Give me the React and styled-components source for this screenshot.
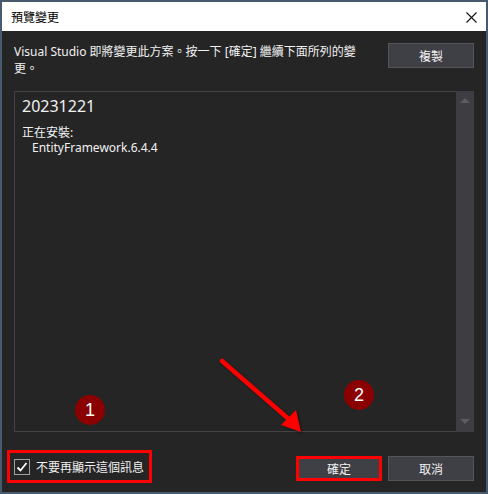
import React, { useState } from 'react'
import styled, { createGlobalStyle } from 'styled-components';

const GlobalStyle = createGlobalStyle`
  html, body {
    margin: 0;
    padding: 0;
    background: #475a6e;
  }
  * { box-sizing: border-box; }
`;

const font = `"Noto Sans", "Noto Sans CJK TC", sans-serif`;

const App = () => {
    const [hideNext, setHideNext] = useState(true)

    return (
        <>
            <GlobalStyle />
            <Window>
                <TitleBar>
                    <Title>預覽變更</Title>
                    <CloseButton aria-label="close">
                        <svg width="11" height="11" viewBox="0 0 11 11">
                            <path d="M0.5 0.5 L10.5 10.5 M10.5 0.5 L0.5 10.5" stroke="#111" strokeWidth="1.1" />
                        </svg>
                    </CloseButton>
                </TitleBar>

                <Body>
                    <Header>
                        <Message>Visual Studio 即將變更此方案。按一下 [確定] 繼續下面所列的變更。</Message>
                        <Button>複製</Button>
                    </Header>

                    <ChangesBox>
                        <ChangesText>
                            <BuildId>20231221</BuildId>
                            <Section>正在安裝:</Section>
                            <Item>EntityFramework.6.4.4</Item>
                        </ChangesText>
                        <ScrollBar>
                            <Arrow $dir="up" />
                            <Arrow $dir="down" />
                        </ScrollBar>
                    </ChangesBox>

                    <Footer>
                        <CheckRow onClick={() => setHideNext(!hideNext)}>
                            <CheckBox>
                                {hideNext && (
                                    <svg width="12" height="12" viewBox="0 0 12 12">
                                        <path d="M1.5 6.5 L4.5 9.5 L10.5 2" fill="none" stroke="#fff" strokeWidth="1.8" />
                                    </svg>
                                )}
                            </CheckBox>
                            <span>不要再顯示這個訊息</span>
                        </CheckRow>
                        <Buttons>
                            <Button $highlight>確定</Button>
                            <Button>取消</Button>
                        </Buttons>
                    </Footer>
                </Body>

                <Badge $x={73} $y={393}>1</Badge>
                <Badge $x={342} $y={378}>2</Badge>

                <PointerArrow width="488" height="494" viewBox="0 0 488 494">
                    <line x1="222" y1="361" x2="291" y2="421" stroke="#ff0000" strokeWidth="4.5" strokeLinecap="round" />
                    <polygon points="281,425 296,410 301,432" fill="#ff0000" />
                </PointerArrow>
            </Window>
        </>
    )
}

export default App


const Window = styled.div`
  position: relative;
  width: 488px;
  height: 494px;
  border: 2px solid #475a6e;
  display: flex;
  flex-direction: column;
  font-family: ${font};
`;

const TitleBar = styled.div`
  height: 29px;
  background: #ffffff;
  display: flex;
  align-items: center;
  justify-content: space-between;
  padding: 0 8px 0 9px;
`;

const Title = styled.div`
  font-size: 12px;
  color: #000;
`;

const CloseButton = styled.div`
  width: 14px;
  height: 14px;
  display: flex;
  align-items: center;
  justify-content: center;
  margin-top: 1px;
`;

const Body = styled.div`
  flex: 1;
  background: #252526;
  padding: 11px 12px 9px 12px;
  display: flex;
  flex-direction: column;
  color: #f1f1f1;
`;

const Header = styled.div`
  display: flex;
  justify-content: space-between;
  align-items: flex-start;
  height: 34px;
  margin-bottom: 15px;
`;

const Message = styled.div`
  width: 350px;
  font-size: 12px;
  line-height: 17px;
  margin-top: 1px;
`;

const Button = styled.button`
  width: 86px;
  height: 25px;
  margin-top: 1px;
  background: #3f3f46;
  border: ${p => p.$highlight ? '3px solid #ff0000' : '1px solid #555558'};
  color: #f1f1f1;
  font-family: ${font};
  font-size: 12px;
  padding: 0;
  cursor: pointer;
`;

const ChangesBox = styled.div`
  height: 341px;
  display: flex;
  border: 1px solid #434346;
  border-right: none;
`;

const ChangesText = styled.div`
  flex: 1;
  padding: 3px 7px;
`;

const BuildId = styled.div`
  font-size: 16px;
  line-height: 22px;
  margin-bottom: 8px;
`;

const Section = styled.div`
  font-size: 12px;
  line-height: 15px;
`;

const Item = styled.div`
  font-size: 12px;
  line-height: 15px;
  padding-left: 10px;
`;

const ScrollBar = styled.div`
  width: 18px;
  margin: -1px 0;
  background: #3e3e42;
  display: flex;
  flex-direction: column;
  justify-content: space-between;
  align-items: center;
  padding: 7px 0 8px;
`;

const Arrow = styled.div`
  width: 0;
  height: 0;
  border-left: 5px solid transparent;
  border-right: 5px solid transparent;
  ${p => p.$dir === 'up'
        ? 'border-bottom: 5px solid #5c5c62;'
        : 'border-top: 5px solid #5c5c62;'}
`;

const Footer = styled.div`
  margin-top: 18px;
  display: flex;
  justify-content: space-between;
  align-items: center;
`;

const CheckRow = styled.label`
  margin-left: -7px;
  width: 145px;
  height: 33px;
  border: 3px solid #ff0000;
  display: flex;
  align-items: center;
  gap: 6px;
  padding-left: 4px;
  font-size: 12px;
  color: #f1f1f1;
  cursor: pointer;
`;

const CheckBox = styled.span`
  width: 16px;
  height: 16px;
  border: 1px solid #a0a0a0;
  display: flex;
  align-items: center;
  justify-content: center;
`;

const Buttons = styled.div`
  display: flex;
  gap: 6px;
  margin-top: 3px;
`;

const Badge = styled.div`
  position: absolute;
  left: ${p => p.$x}px;
  top: ${p => p.$y}px;
  width: 30px;
  height: 30px;
  border-radius: 50%;
  background: #8b0000;
  color: #ffffff;
  font-family: "Liberation Sans", Arial, sans-serif;
  font-size: 18px;
  display: flex;
  align-items: center;
  justify-content: center;
`;

const PointerArrow = styled.svg`
  position: absolute;
  left: -2px;
  top: -2px;
  pointer-events: none;
  filter: drop-shadow(1px 1px 1px rgba(0, 0, 0, 0.5));
`;
